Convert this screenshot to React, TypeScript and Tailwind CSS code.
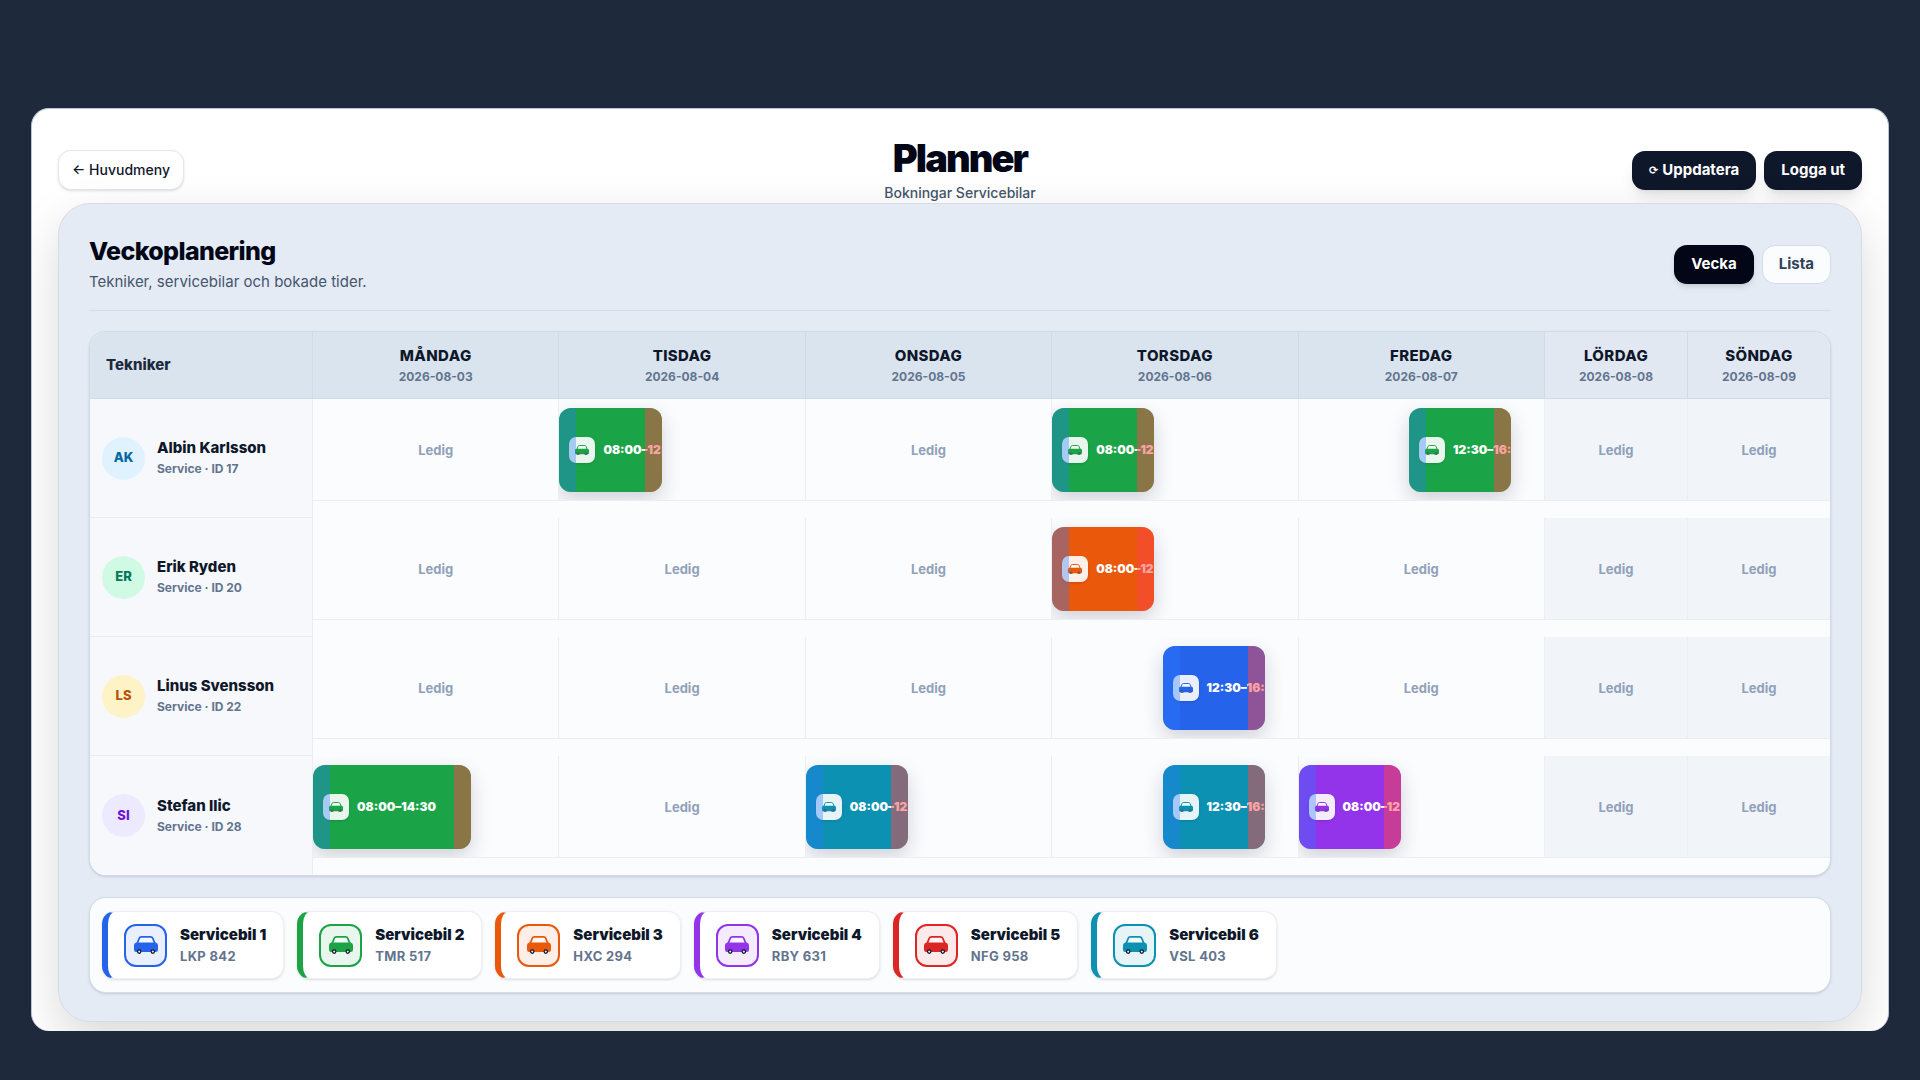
import React from 'react';

type Booking = { car: number; from: number; to: number; label: string };

type Technician = {
  initials: string;
  name: string;
  id: number;
  avatar: string;
  bookings: Record<number, Booking>;
};

const DAY_START = 8;
const DAY_LENGTH = 10;

const days = [
  { name: 'MÅNDAG', date: '2026-08-03' },
  { name: 'TISDAG', date: '2026-08-04' },
  { name: 'ONSDAG', date: '2026-08-05' },
  { name: 'TORSDAG', date: '2026-08-06' },
  { name: 'FREDAG', date: '2026-08-07' },
  { name: 'LÖRDAG', date: '2026-08-08', weekend: true },
  { name: 'SÖNDAG', date: '2026-08-09', weekend: true },
];

const cars = [
  { name: 'Servicebil 1', plate: 'LKP 842', edge: 'border-l-[#2563eb]', fill: 'bg-[#2563eb]', icon: 'text-[#2563eb] border-[#2563eb] bg-[#e9effd]' },
  { name: 'Servicebil 2', plate: 'TMR 517', edge: 'border-l-[#1ba346]', fill: 'bg-[#1aa447]', icon: 'text-[#1ba346] border-[#1ba346] bg-[#e8f6ed]' },
  { name: 'Servicebil 3', plate: 'HXC 294', edge: 'border-l-[#ea580c]', fill: 'bg-[#ea580c]', icon: 'text-[#ea580c] border-[#ea580c] bg-[#fdeee7]' },
  { name: 'Servicebil 4', plate: 'RBY 631', edge: 'border-l-[#9333ea]', fill: 'bg-[#9333ea]', icon: 'text-[#9333ea] border-[#9333ea] bg-[#f4ebfd]' },
  { name: 'Servicebil 5', plate: 'NFG 958', edge: 'border-l-[#dc2626]', fill: 'bg-[#dc2626]', icon: 'text-[#dc2626] border-[#dc2626] bg-[#fce9e9]' },
  { name: 'Servicebil 6', plate: 'VSL 403', edge: 'border-l-[#0c91b2]', fill: 'bg-[#0c91b2]', icon: 'text-[#0c91b2] border-[#0c91b2] bg-[#e7f4f7]' },
];

const morning = { from: 8, to: 12.25, label: '08:00–12:15' };
const afternoon = { from: 12.5, to: 16.75, label: '12:30–16:45' };

const technicians: Technician[] = [
  {
    initials: 'AK',
    name: 'Albin Karlsson',
    id: 17,
    avatar: 'bg-[#e0f2fe] text-[#0369a1]',
    bookings: { 1: { car: 1, ...morning }, 3: { car: 1, ...morning }, 4: { car: 1, ...afternoon } },
  },
  {
    initials: 'ER',
    name: 'Erik Ryden',
    id: 20,
    avatar: 'bg-[#d1fae5] text-[#047857]',
    bookings: { 3: { car: 2, ...morning } },
  },
  {
    initials: 'LS',
    name: 'Linus Svensson',
    id: 22,
    avatar: 'bg-[#fef3c7] text-[#b45309]',
    bookings: { 3: { car: 0, ...afternoon } },
  },
  {
    initials: 'SI',
    name: 'Stefan Ilic',
    id: 28,
    avatar: 'bg-[#ede9fe] text-[#6d16d9]',
    bookings: {
      0: { car: 1, from: 8, to: 14.5, label: '08:00–14:30' },
      2: { car: 5, ...morning },
      3: { car: 5, ...afternoon },
      4: { car: 3, ...morning },
    },
  },
];

const CarIcon: React.FC<{ className: string }> = ({ className }) => (
  <svg viewBox="0 0 24 18" className={className} aria-hidden="true">
    <path
      d="M3.2 7.4 5.2 2.4Q5.8.9 7.4.9h9.2q1.6 0 2.2 1.5l2 5"
      fill="#fff"
      fillOpacity="0.5"
      stroke="currentColor"
      strokeWidth="1.7"
    />
    <path d="M2.4 6.4h19.2Q24 6.8 24 9.2v4.6q0 2.2-2.2 2.2H2.2Q0 16 0 13.8V9.2q0-2.4 2.4-2.8Z" fill="currentColor" />
    <circle cx="5.2" cy="15.6" r="1.7" fill="#e2e8f0" stroke="#0f172a" strokeWidth="1.2" />
    <circle cx="18.8" cy="15.6" r="1.7" fill="#e2e8f0" stroke="#0f172a" strokeWidth="1.2" />
  </svg>
);

const BookingBlock: React.FC<{ booking: Booking }> = ({ booking }) => {
  const car = cars[booking.car];
  const left = ((booking.from - DAY_START) / DAY_LENGTH) * 100;
  const width = ((booking.to - booking.from) / DAY_LENGTH) * 100;
  return (
    <div
      className={`relative flex h-[84px] items-center gap-2 overflow-hidden rounded-xl pl-[10px] shadow-[0_8px_20px_rgba(15,23,42,0.18)] ${car.fill}`}
      style={{ marginLeft: `${left}%`, width: `calc(${width}% - 2px)` }}
    >
      <span className={`flex size-[26px] shrink-0 items-center justify-center rounded-[7px] shadow-sm ${car.icon}`}>
        <CarIcon className="w-[14px]" />
      </span>
      <span className="whitespace-nowrap text-xs font-black text-white">{booking.label}</span>
      {/* Travel time before and after the job */}
      <span className="absolute inset-y-0 left-0 w-[17px] bg-[#2b7bff]/35" />
      <span className="absolute inset-y-0 right-0 w-[17px] bg-[#fa4646]/50" />
    </div>
  );
};

const Header: React.FC = () => (
  <header className="grid grid-cols-[1fr_auto_1fr] items-center">
    <div>
      <button className="h-10 rounded-[13px] border border-slate-200 bg-white px-[13px] text-sm font-medium text-slate-900 shadow-sm">
        ← Huvudmeny
      </button>
    </div>
    <div className="text-center">
      <h1 className="text-[38px] leading-[46px] font-black tracking-tighter text-[#020617]">Planner</h1>
      <p className="text-sm leading-6 font-medium text-slate-600">Bokningar Servicebilar</p>
    </div>
    <div className="flex justify-end gap-2">
      <button className="flex h-[39px] items-center gap-1 rounded-[13px] bg-slate-900 px-[17px] text-[15px] font-bold text-white shadow-lg">
        <span className="text-[11px]">⟳</span>
        Uppdatera
      </button>
      <button className="h-[39px] rounded-[13px] bg-slate-900 px-[17px] text-[15px] font-bold text-white shadow-lg">
        Logga ut
      </button>
    </div>
  </header>
);

const WeekTable: React.FC = () => (
  <div className="mt-5 overflow-hidden rounded-[17px] border border-[#cfdbe7] bg-[#fbfcfe] shadow-sm">
    <table className="w-full table-fixed border-separate border-spacing-0">
      <colgroup>
        <col className="w-[222px]" />
        {days.map((day) => (
          <col key={day.date} className={day.weekend ? 'w-[143px]' : ''} />
        ))}
      </colgroup>
      <thead>
        <tr className="h-[67px]">
          <th className="border-b border-[#cfdbe7] bg-[#dae4ef] px-4 text-left text-[15px] font-extrabold text-slate-800">
            Tekniker
          </th>
          {days.map((day) => (
            <th
              key={day.date}
              className={`border-b border-l border-[#cfdbe7] p-0 ${day.weekend ? 'bg-[#e2e8f2]' : 'bg-[#dae4ef]'}`}
            >
              <div className="text-[15px] leading-5 font-extrabold tracking-wide text-slate-900">{day.name}</div>
              <div className="mt-[3px] text-xs leading-4 font-bold text-slate-500">{day.date}</div>
            </th>
          ))}
        </tr>
      </thead>
      <tbody>
        {technicians.map((tech, row) => (
          <tr key={tech.id} className="h-[119px]">
            <th
              scope="row"
              className={`border-[#e9eef3] bg-[#f6f8fc] px-3 text-left ${row < technicians.length - 1 ? 'border-b' : ''}`}
            >
              <div className="flex items-center gap-3">
                <span className={`flex size-[43px] shrink-0 items-center justify-center rounded-full text-[13px] font-extrabold ${tech.avatar}`}>
                  {tech.initials}
                </span>
                <div>
                  <div className="text-[15px] leading-[22px] font-extrabold text-slate-900">{tech.name}</div>
                  <div className="text-xs leading-5 font-bold text-slate-500">Service · ID {tech.id}</div>
                </div>
              </div>
            </th>
            {days.map((day, i) => (
              <td key={day.date} className={`p-0 align-top ${i === 0 ? 'border-l border-[#e9eef3]' : ''}`}>
                <div
                  className={`h-[102px] overflow-hidden border-b border-[#e9eef3] pt-[9px] ${i > 0 ? 'border-l' : ''} ${day.weekend ? 'bg-[#f1f4f9]' : ''}`}
                >
                  {tech.bookings[i] ? (
                    <BookingBlock booking={tech.bookings[i]} />
                  ) : (
                    <div className="text-center text-[13px] leading-[84px] font-bold text-slate-400">Ledig</div>
                  )}
                </div>
              </td>
            ))}
          </tr>
        ))}
      </tbody>
    </table>
  </div>
);

const CarLegend: React.FC = () => (
  <ul className="mt-[21px] flex flex-wrap gap-[13px] rounded-[17px] border border-[#d3dde8] bg-[#fbfcfe] px-3 py-[13px] shadow">
    {cars.map((car) => (
      <li
        key={car.plate}
        className={`flex h-[68px] items-center gap-[13px] rounded-[13px] border border-l-[6px] border-[#eceff3] bg-white pr-[17px] pl-4 shadow-sm ${car.edge}`}
      >
        <span className={`flex size-[43px] items-center justify-center rounded-[12px] border-2 ${car.icon}`}>
          <CarIcon className="w-6" />
        </span>
        <div>
          <div className="text-[15px] leading-[22px] font-black text-slate-900">{car.name}</div>
          <div className="text-[13px] leading-5 font-bold tracking-wide text-slate-500">{car.plate}</div>
        </div>
      </li>
    ))}
  </ul>
);

const App: React.FC = () => {
  return (
    <div className="min-h-screen bg-[#1e293b] px-[31px] pt-[108px] pb-12 font-[Inter,'DejaVu_Sans',sans-serif]">
      <main className="overflow-hidden rounded-[18px] border border-b-0 border-[#b9c6d9] bg-white px-[26px] pt-[26px] pb-[9px]">
        <Header />
        <section className="relative -mt-[2px] rounded-[32px] border border-[#d3dde8] bg-[#e4ebf5] px-[30px] pt-[29px] pb-7 shadow-[0_20px_50px_rgba(0,0,0,0.15)]">
          <div className="flex items-center justify-between border-b border-[#d3dde8] pb-[15px]">
            <div>
              <h2 className="text-[25px] leading-9 font-extrabold tracking-tight text-[#020617]">Veckoplanering</h2>
              <p className="text-[15px] leading-[26px] text-slate-600">Tekniker, servicebilar och bokade tider.</p>
            </div>
            <div className="flex gap-2">
              <button className="h-[39px] rounded-[13px] bg-[#020617] px-[17px] text-[15px] font-bold text-white shadow-md">
                Vecka
              </button>
              <button className="h-[39px] rounded-[13px] border border-[#d3dde8] bg-[#fbfcfe] px-4 text-[15px] font-bold text-slate-700">
                Lista
              </button>
            </div>
          </div>
          <WeekTable />
          <CarLegend />
        </section>
      </main>
    </div>
  );
};

export default App;
